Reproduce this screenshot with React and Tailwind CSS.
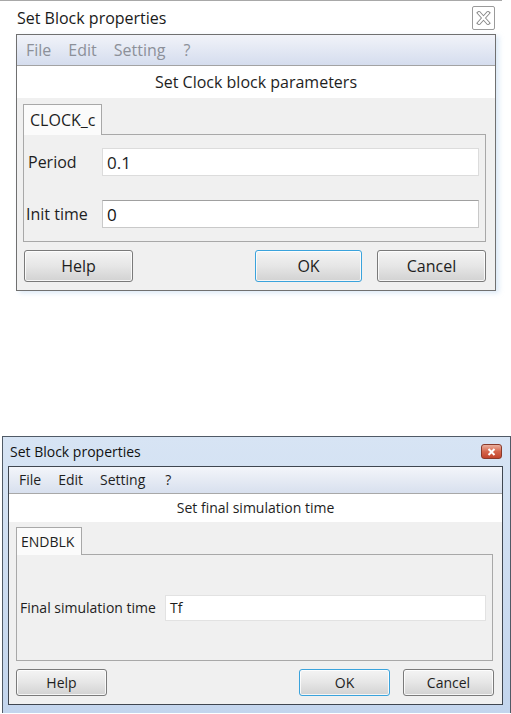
const btn =
  "flex items-center justify-center rounded-[3px] border bg-gradient-to-b from-[#f4f4f4] via-[#e6e6e6] to-[#d2d2d2] text-[#1e1e1e] shadow-[inset_0_0_0_1px_rgba(255,255,255,0.8)]";

function GrayClose() {
  return (
    <div className="flex h-[24px] w-[23px] items-center justify-center rounded-[2px] border border-[#9a9a9a] bg-white">
      <svg width="15" height="14" viewBox="0 0 15 14">
        <path d="M3 2 L12 12 M12 2 L3 12" stroke="#8a8a8a" strokeWidth="4" strokeLinecap="square" />
        <path d="M3 2 L12 12 M12 2 L3 12" stroke="#ffffff" strokeWidth="2" strokeLinecap="square" />
      </svg>
    </div>
  );
}

function RedClose() {
  return (
    <div className="flex h-[15px] w-[21px] items-center justify-center rounded-[3px] border border-[#8a3a2a] bg-gradient-to-b from-[#eab09e] via-[#d5664c] to-[#c2432c]">
      <svg width="9" height="8" viewBox="0 0 9 8">
        <path d="M1.5 1 L7.5 7 M7.5 1 L1.5 7" stroke="#ffffff" strokeWidth="2" />
      </svg>
    </div>
  );
}

function ClockDialog() {
  return (
    <div className="w-[511px] text-[16px]">
      <div className="h-px w-[502px] bg-[#a8a8a8]" />
      <div className="flex h-[33px] w-[511px] items-center justify-between pl-[17px] pr-[16px]">
        <span className="text-[#1a1a1a]">Set Block properties</span>
        <GrayClose />
      </div>
      <div className="ml-[16px] w-[480px] border border-[#707070] bg-[#f0f0f0] shadow-[3px_2px_5px_rgba(150,190,230,0.35)]">
        <div className="flex h-[31px] items-center border-b border-[#a3a3a3] bg-gradient-to-b from-[#f1f3f9] to-[#d5ddee] pl-[9px] text-[#8c9099]">
          <span>File</span>
          <span className="ml-[17px]">Edit</span>
          <span className="ml-[17px]">Setting</span>
          <span className="ml-[18px]">?</span>
        </div>
        <div className="flex h-[32px] items-center justify-center bg-white text-[#1e1e1e]">
          Set Clock block parameters
        </div>
        <div className="px-[6px] pt-[6px]">
          <div className="relative z-10 -mb-px flex h-[31px] w-[79px] items-center border border-b-0 border-[#a8a8a8] bg-[#fbfbfb] pl-[6px] text-[#1e1e1e]">
            CLOCK_c
          </div>
          <div className="mr-[3px] flex h-[108px] flex-col gap-[24px] border border-[#a8a8a8] bg-[#f0f0f0] pr-[6px] pt-[13px]">
            <div className="flex items-center">
              <span className="w-[78px] pl-[4px] text-[#1e1e1e]">Period</span>
              <div className="flex h-[28px] flex-1 items-center border border-[#dcdcdc] bg-white pl-[4px] text-[17px] text-[#1e1e1e]">
                0.1
              </div>
            </div>
            <div className="flex items-center">
              <span className="w-[78px] pl-[2px] text-[#1e1e1e]">Init time</span>
              <div className="flex h-[28px] flex-1 items-center border border-[#c9c9c9] border-t-[#a0a0a0] bg-white pl-[4px] text-[17px] text-[#111]">
                0
              </div>
            </div>
          </div>
        </div>
        <div className="flex items-center pb-[8px] pl-[7px] pr-[9px] pt-[8px]">
          <div className={`${btn} h-[32px] w-[109px] border-[#7a7a7a]`}>Help</div>
          <div className="flex-1" />
          <div className={`${btn} h-[32px] w-[107px] border-[#3aa3dc] shadow-[inset_0_0_0_1px_#bfe6f8]`}>OK</div>
          <div className={`${btn} ml-[15px] h-[32px] w-[109px] border-[#7a7a7a]`}>Cancel</div>
        </div>
      </div>
    </div>
  );
}

function EndDialog() {
  return (
    <div className="ml-[2px] mt-[145px] w-[509px] border border-b-0 border-[#505a66] bg-gradient-to-b from-[#d7e4f4] to-[#c3d5ed] pb-[8px] text-[14px]">
      <div className="flex h-[29px] items-center justify-between pl-[7px] pr-[8px]">
        <span className="pt-[1px] text-[#111]">Set Block properties</span>
        <RedClose />
      </div>
      <div className="ml-[5px] w-[495px] border border-[#3f4650] bg-[#f0f0f0]">
        <div className="flex h-[27px] items-center border-b border-[#a8a8a8] bg-gradient-to-b from-[#f3f5fa] to-[#d8e0ee] pl-[10px] text-[#1e1e1e]">
          <span>File</span>
          <span className="ml-[17px]">Edit</span>
          <span className="ml-[17px]">Setting</span>
          <span className="ml-[20px]">?</span>
        </div>
        <div className="flex h-[28px] items-center justify-center bg-white text-[#1e1e1e]">
          Set final simulation time
        </div>
        <div className="px-[7px] pt-[5px]">
          <div className="relative z-10 -mb-px flex h-[28px] w-[66px] items-center border border-b-0 border-[#a8a8a8] bg-[#fbfbfb] pl-[4px] text-[#1e1e1e]">
            ENDBLK
          </div>
          <div className="mr-[2px] flex h-[107px] items-center border border-[#a8a8a8] bg-[#f0f0f0] pr-[6px]">
            <span className="w-[148px] pl-[3px] text-[#1e1e1e]">Final simulation time</span>
            <div className="flex h-[26px] flex-1 items-center border border-[#e2e2e2] bg-white pl-[4px] text-[#1e1e1e]">
              Tf
            </div>
          </div>
        </div>
        <div className="flex items-center pb-[8px] pl-[7px] pr-[8px] pt-[8px]">
          <div className={`${btn} h-[27px] w-[91px] border-[#7a7a7a]`}>Help</div>
          <div className="flex-1" />
          <div className={`${btn} h-[27px] w-[91px] border-[#3aa3dc] shadow-[inset_0_0_0_1px_#bfe6f8]`}>OK</div>
          <div className={`${btn} ml-[13px] h-[27px] w-[91px] border-[#7a7a7a]`}>Cancel</div>
        </div>
      </div>
    </div>
  );
}

export default function App() {
  return (
    <div className="h-[714px] w-[511px] overflow-hidden bg-white font-['Open_Sans','Noto_Sans',sans-serif] leading-none">
      <ClockDialog />
      <EndDialog />
    </div>
  );
}
